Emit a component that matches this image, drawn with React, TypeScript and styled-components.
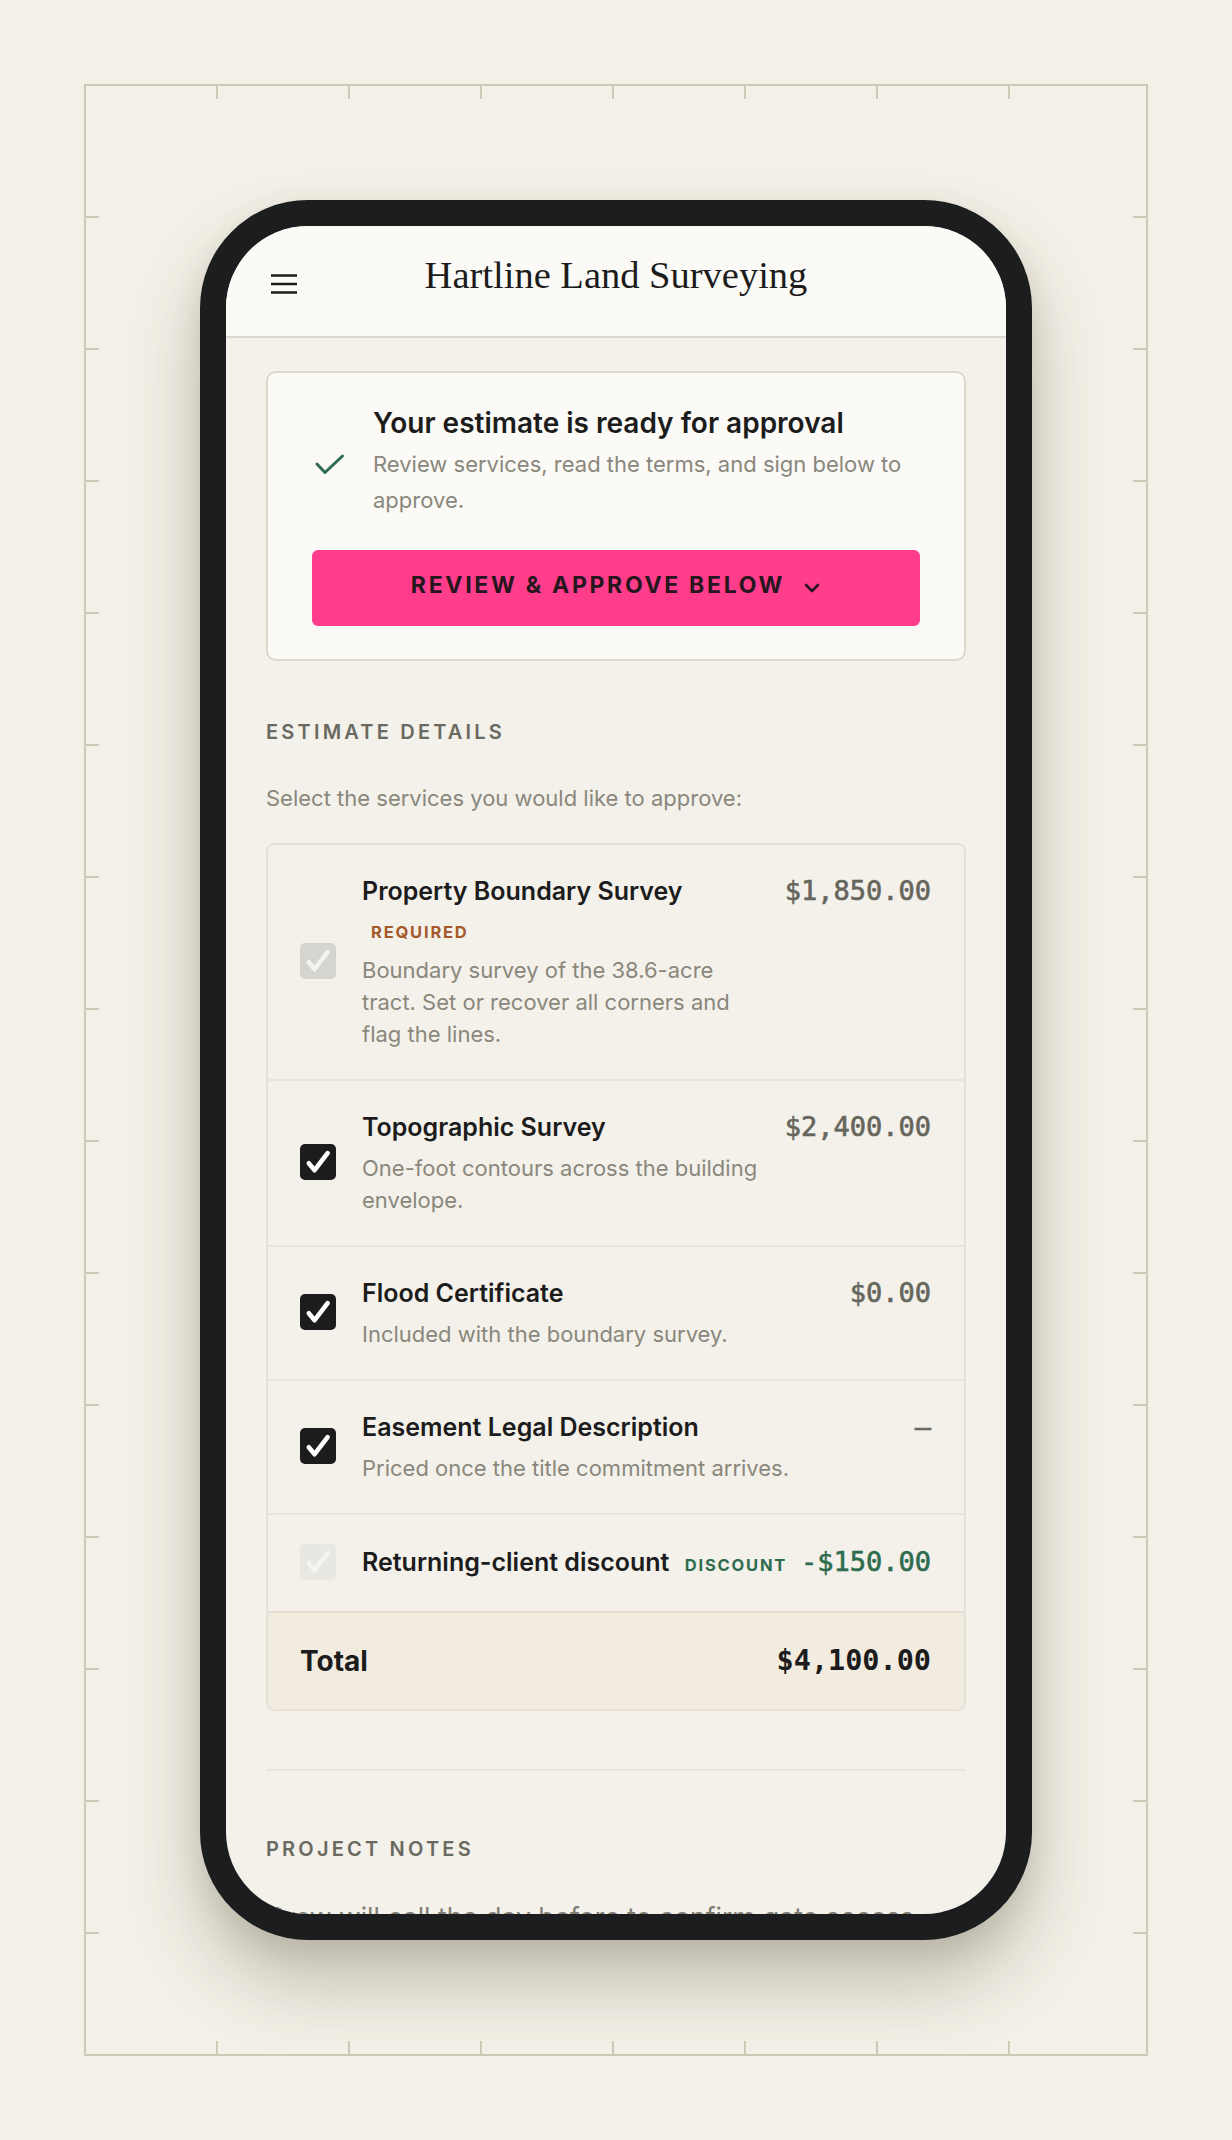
import React from "react";
import styled, { createGlobalStyle } from "styled-components";

const GlobalStyle = createGlobalStyle`
  html, body { margin: 0; padding: 0; background: #f3f0e7; }
  body {
    font-family: Inter, "Noto Sans", sans-serif;
    color: #1c1c1c;
    -webkit-font-smoothing: antialiased;
  }
  * { box-sizing: border-box; }
`;

const Page = styled.div`
  padding: 84px;
  background: #f3f0e7;
`;

const Frame = styled.div`
  position: relative;
  height: 1972px;
  border: 2px solid #cfcab8;
  display: flex;
  align-items: center;
  justify-content: center;
`;

const Ticks = styled.svg`
  position: absolute;
  left: -2px;
  top: -2px;
  pointer-events: none;
`;

const Phone = styled.div`
  position: relative;
  width: 832px;
  height: 1740px;
  padding: 26px;
  background: #1b1d1e;
  border-radius: 108px;
  box-shadow: 0 44px 70px rgba(70, 62, 40, 0.27), 0 10px 30px rgba(70, 62, 40, 0.12);
`;

const Screen = styled.div`
  height: 100%;
  border-radius: 82px;
  overflow: hidden;
  background: #f3f1ea;
  display: flex;
  flex-direction: column;
`;

const Header = styled.header`
  flex: none;
  height: 112px;
  display: grid;
  grid-template-columns: 36px 1fr 36px;
  align-items: end;
  padding: 0 40px 42px;
  background: #fbfaf6;
  border-bottom: 2px solid #dcd8cc;
`;

const MenuButton = styled.button`
  width: 36px;
  height: 21px;
  padding: 0;
  border: 0;
  background: none;
  display: flex;
  justify-content: center;
`;

const BrandTitle = styled.h1`
  margin: 0;
  text-align: center;
  font-family: "Liberation Serif", "Times New Roman", serif;
  font-weight: 400;
  font-size: 38.5px;
  line-height: 1;
  color: #1c1c1c;
`;

const Main = styled.main`
  padding: 33px 40px 0;
`;

const NoticeCard = styled.section`
  background: #fbfaf6;
  border: 2px solid #dcd8cb;
  border-radius: 10px;
  padding: 32px 44px 33px;
`;

const Notice = styled.div`
  display: flex;
  align-items: center;
  gap: 28px;
`;

const NoticeText = styled.div`
  flex: 1;
  min-width: 0;
`;

const NoticeTitle = styled.h2`
  margin: 0;
  font-size: 28px;
  line-height: 36px;
  font-weight: 600;
  color: #1c1c1c;
`;

const NoticeBody = styled.p`
  margin: 4.5px 0 0;
  font-size: 22px;
  line-height: 36px;
  color: #8a877c;
`;

const ApproveButton = styled.button`
  margin-top: 32.5px;
  width: 100%;
  height: 76px;
  border: 0;
  border-radius: 6px;
  padding: 0 0 6px;
  background: #ff3d8b;
  color: #26161d;
  font-family: Inter, sans-serif;
  font-weight: 700;
  font-size: 23px;
  line-height: 1;
  letter-spacing: 2.7px;
  display: flex;
  align-items: center;
  justify-content: center;
  gap: 18px;

  svg {
    margin-top: 6px;
  }
`;

const SectionLabel = styled.h3<{ $gap: number }>`
  margin: ${(p) => p.$gap}px 0 0;
  font-size: 20px;
  line-height: 24px;
  font-weight: 600;
  letter-spacing: 3.2px;
  color: #6a695f;
`;

const Lead = styled.p`
  margin: 38px 0 0;
  font-size: 22px;
  line-height: 33px;
  color: #8a877c;
`;

const Table = styled.div`
  margin-top: 28px;
  border: 2px solid #e6e2d7;
  border-radius: 8px;
  overflow: hidden;
`;

const Row = styled.div<{ $compact?: boolean }>`
  display: flex;
  align-items: center;
  padding: ${(p) => (p.$compact ? "28px 33px 30px 32px" : "27px 33px 29px 32px")};
  & + & {
    border-top: 2px solid #e9e5dc;
  }
`;

type BoxVariant = "checked" | "locked" | "faint";

const boxBg: Record<BoxVariant, string> = {
  checked: "#1c1c1c",
  locked: "#d6d4ce",
  faint: "#e9e7e1",
};
const boxMark: Record<BoxVariant, string> = {
  checked: "#ffffff",
  locked: "#f4f3ef",
  faint: "#f5f4f0",
};

const Box = styled.span<{ $variant: BoxVariant }>`
  flex: none;
  width: 36px;
  height: 36px;
  margin-right: 26px;
  border-radius: 5px;
  background: ${(p) => boxBg[p.$variant]};
  display: flex;
  align-items: center;
  justify-content: center;
`;

const Info = styled.div`
  flex: 1;
  min-width: 0;
`;

const ItemTitle = styled.div<{ $nowrap?: boolean }>`
  font-size: 25px;
  line-height: 38px;
  font-weight: 600;
  color: #1c1c1c;
  white-space: ${(p) => (p.$nowrap ? "nowrap" : "normal")};
`;

const Tag = styled.span<{ $tone: "warn" | "good" }>`
  display: inline-block;
  margin-left: 9px;
  font-size: 16.5px;
  line-height: 18px;
  font-weight: 700;
  letter-spacing: 1.8px;
  color: ${(p) => (p.$tone === "warn" ? "#a4592b" : "#2e6b4f")};
`;

const ItemDesc = styled.p`
  margin: 6px 0 0;
  font-size: 22px;
  line-height: 32px;
  color: #8a877c;
`;

const Price = styled.span<{ $tone?: "muted" | "good" | "strong" }>`
  align-self: ${(p) => (p.$tone === "strong" ? "center" : "flex-start")};
  margin-left: 14px;
  white-space: nowrap;
  font-family: "DejaVu Sans Mono", "Liberation Mono", monospace;
  font-size: ${(p) => (p.$tone === "strong" ? "28.5px" : "27px")};
  line-height: 38px;
  font-weight: ${(p) => (p.$tone === "strong" ? 700 : 400)};
  -webkit-text-stroke: ${(p) => (p.$tone === "strong" ? "0" : "0.6px currentColor")};
  color: ${(p) => (p.$tone === "good" ? "#2e6b4f" : p.$tone === "strong" ? "#1c1c1c" : "#66655c")};
`;

const TotalRow = styled.div`
  height: 98px;
  padding: 0 33px 0 32px;
  display: flex;
  align-items: center;
  justify-content: space-between;
  background: #f2ebdf;
  border-top: 2px solid #e4ddd0;
`;

const TotalLabel = styled.span`
  font-size: 28px;
  font-weight: 700;
  color: #1c1c1c;
`;

const Divider = styled.hr`
  margin: 58px 0 0;
  border: 0;
  height: 2px;
  background: #e9e5db;
`;

const Notes = styled.p`
  margin: 37px 0 0;
  font-size: 26.5px;
  line-height: 39px;
  color: #7f7d74;
`;

function CheckMark({ color }: { color: string }) {
  return (
    <svg width="36" height="36" viewBox="0 0 36 36" aria-hidden>
      <path
        d="M8.8 19.2 L14.6 26.2 L27.6 9.2"
        fill="none"
        stroke={color}
        strokeWidth="4.6"
        strokeLinecap="round"
        strokeLinejoin="round"
      />
    </svg>
  );
}

function Checkbox({ variant }: { variant: BoxVariant }) {
  return (
    <Box $variant={variant} role="checkbox" aria-checked="true">
      <CheckMark color={boxMark[variant]} />
    </Box>
  );
}

function TickMarks() {
  const w = 1064;
  const h = 1972;
  const len = 15;
  const lines: React.ReactNode[] = [];
  for (let k = 1; k <= 7; k++) {
    const x = 133 + 132 * (k - 1);
    lines.push(<line key={`t${k}`} x1={x} y1={0} x2={x} y2={len} />);
    lines.push(<line key={`b${k}`} x1={x} y1={h - len} x2={x} y2={h} />);
  }
  for (let k = 1; k <= 14; k++) {
    const y = 133 + 132 * (k - 1);
    lines.push(<line key={`l${k}`} x1={0} y1={y} x2={len} y2={y} />);
    lines.push(<line key={`r${k}`} x1={w - len} y1={y} x2={w} y2={y} />);
  }
  return (
    <Ticks width={w} height={h} viewBox={`0 0 ${w} ${h}`} aria-hidden>
      <g stroke="#cfcab8" strokeWidth="2">{lines}</g>
    </Ticks>
  );
}

type Item = {
  title: string;
  desc?: string;
  price: string;
  variant: BoxVariant;
  tag?: { label: string; tone: "warn" | "good" };
  tone?: "muted" | "good";
};

const items: Item[] = [
  {
    title: "Property Boundary Survey",
    desc: "Boundary survey of the 38.6-acre tract. Set or recover all corners and flag the lines.",
    price: "$1,850.00",
    variant: "locked",
    tag: { label: "REQUIRED", tone: "warn" },
  },
  {
    title: "Topographic Survey",
    desc: "One-foot contours across the building envelope.",
    price: "$2,400.00",
    variant: "checked",
  },
  {
    title: "Flood Certificate",
    desc: "Included with the boundary survey.",
    price: "$0.00",
    variant: "checked",
  },
  {
    title: "Easement Legal Description",
    desc: "Priced once the title commitment arrives.",
    price: "—",
    variant: "checked",
  },
  {
    title: "Returning-client discount",
    price: "-$150.00",
    variant: "faint",
    tag: { label: "DISCOUNT", tone: "good" },
    tone: "good",
  },
];

export default function App() {
  return (
    <>
      <GlobalStyle />
      <Page>
        <Frame>
          <TickMarks />
          <Phone>
            <Screen>
              <Header>
                <MenuButton aria-label="Menu">
                  <svg width="26" height="21" viewBox="0 0 26 21" aria-hidden>
                    <g stroke="#1c1c1c" strokeWidth="2.5">
                      <line x1="0" y1="2.5" x2="26" y2="2.5" />
                      <line x1="0" y1="11" x2="26" y2="11" />
                      <line x1="0" y1="19.5" x2="26" y2="19.5" />
                    </g>
                  </svg>
                </MenuButton>
                <BrandTitle>Hartline Land Surveying</BrandTitle>
                <span />
              </Header>
              <Main>
                <NoticeCard>
                  <Notice>
                    <svg width="33" height="28" viewBox="0 0 33 28" aria-hidden>
                      <path
                        d="M5 17 L13 25.5 L30.5 9"
                        fill="none"
                        stroke="#2e6b4f"
                        strokeWidth="3"
                        strokeLinecap="round"
                        strokeLinejoin="round"
                      />
                    </svg>
                    <NoticeText>
                      <NoticeTitle>Your estimate is ready for approval</NoticeTitle>
                      <NoticeBody>Review services, read the terms, and sign below to approve.</NoticeBody>
                    </NoticeText>
                  </Notice>
                  <ApproveButton>
                    <span>REVIEW &amp; APPROVE BELOW</span>
                    <svg width="18" height="12" viewBox="0 0 18 12" aria-hidden>
                      <path
                        d="M3 3 L9 9 L15 3"
                        fill="none"
                        stroke="#26161d"
                        strokeWidth="2.6"
                        strokeLinecap="round"
                        strokeLinejoin="round"
                      />
                    </svg>
                  </ApproveButton>
                </NoticeCard>

                <SectionLabel $gap={59}>ESTIMATE DETAILS</SectionLabel>
                <Lead>Select the services you would like to approve:</Lead>

                <Table>
                  {items.map((it) => (
                    <Row key={it.title} $compact={!it.desc}>
                      <Checkbox variant={it.variant} />
                      <Info>
                        <ItemTitle $nowrap={!it.desc}>
                          {it.title}
                          {it.tag ? " " : null}
                          {it.tag ? <Tag $tone={it.tag.tone}>{it.tag.label}</Tag> : null}
                        </ItemTitle>
                        {it.desc ? <ItemDesc>{it.desc}</ItemDesc> : null}
                      </Info>
                      <Price $tone={it.tone ?? "muted"}>{it.price}</Price>
                    </Row>
                  ))}
                  <TotalRow>
                    <TotalLabel>Total</TotalLabel>
                    <Price $tone="strong">$4,100.00</Price>
                  </TotalRow>
                </Table>

                <Divider />
                <SectionLabel $gap={66}>PROJECT NOTES</SectionLabel>
                <Notes>Crew will call the day before to confirm gate access.</Notes>
                <Notes>Property pins will be flagged in orange.</Notes>
              </Main>
            </Screen>
          </Phone>
        </Frame>
      </Page>
    </>
  );
}
